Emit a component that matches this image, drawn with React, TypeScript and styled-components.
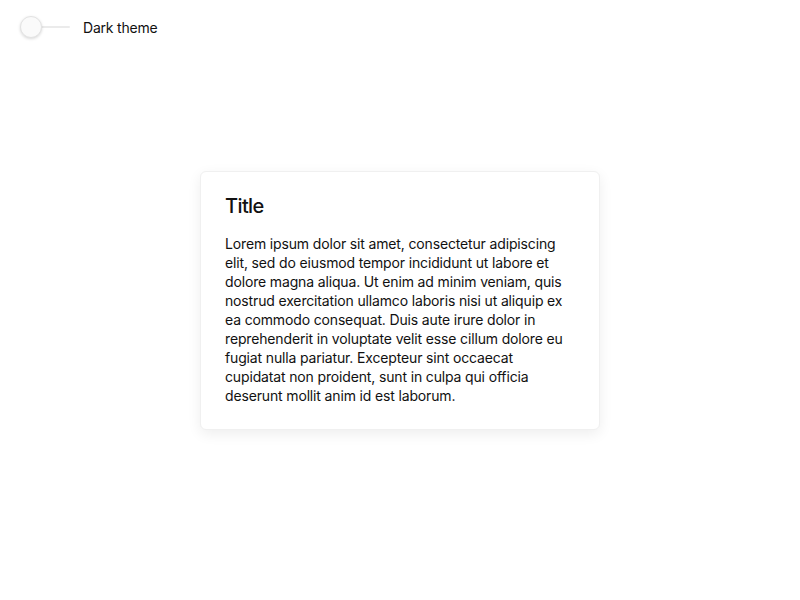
import React, { useState } from "react";
import styled, { createGlobalStyle } from "styled-components";

const Global = createGlobalStyle`
  html, body { margin: 0; padding: 0; background: #ffffff; }
  body { font-family: Inter, "Noto Sans", "Liberation Sans", sans-serif; color: #111111; }
  * { box-sizing: border-box; }
`;

const Page = styled.div`
  min-height: 100vh;
  display: grid;
  grid-template-rows: 54px 1fr 54px;
`;

const Header = styled.header`
  display: flex;
  align-items: center;
  padding-left: 20px;
  gap: 13px;
`;

const SwitchTrack = styled.button<{ $on: boolean }>`
  position: relative;
  width: 50px;
  height: 20px;
  padding: 0;
  border: none;
  background: transparent;
  cursor: pointer;
  display: flex;
  align-items: center;
  &::before {
    content: "";
    width: 100%;
    height: 2px;
    border-radius: 1px;
    background: ${(p) => (p.$on ? "#6b7280" : "#ebebeb")};
  }
`;

const Thumb = styled.span<{ $on: boolean }>`
  position: absolute;
  top: 0;
  left: ${(p) => (p.$on ? "28px" : "0")};
  width: 22px;
  height: 22px;
  margin-top: -1px;
  border-radius: 50%;
  background: #fafafa;
  border: 1px solid #e3e3e3;
  box-shadow: 0 1px 3px rgba(0, 0, 0, 0.15);
`;

const Label = styled.span`
  font-size: 14px;
  letter-spacing: -0.2px;
  color: #111;
`;

const Main = styled.main`
  display: flex;
  align-items: center;
  justify-content: center;
`;

const Card = styled.section`
  width: 400px;
  background: #fff;
  border: 1px solid #f0f0f0;
  border-radius: 6px;
  padding: 22px 24px 24px;
  box-shadow: 0 4px 14px rgba(0, 0, 0, 0.07);
`;

const Title = styled.h2`
  margin: 0 0 16px;
  font-size: 20px;
  line-height: 24px;
  font-weight: 500;
  letter-spacing: -0.6px;
  color: #111;
`;

const Body = styled.p`
  margin: 0;
  font-size: 14px;
  line-height: 19px;
  letter-spacing: -0.15px;
  color: #111;
`;

export default function App() {
  const [dark, setDark] = useState(false);
  return (
    <>
      <Global />
      <Page>
        <Header>
          <SwitchTrack $on={dark} onClick={() => setDark(!dark)} aria-label="Dark theme">
            <Thumb $on={dark} />
          </SwitchTrack>
          <Label>Dark theme</Label>
        </Header>
        <Main>
          <Card>
            <Title>Title</Title>
            <Body>
              Lorem ipsum dolor sit amet, consectetur adipiscing elit, sed do eiusmod tempor incididunt ut
              labore et dolore magna aliqua. Ut enim ad minim veniam, quis nostrud exercitation ullamco
              laboris nisi ut aliquip ex ea commodo consequat. Duis aute irure dolor in reprehenderit in
              voluptate velit esse cillum dolore eu fugiat nulla pariatur. Excepteur sint occaecat cupidatat
              non proident, sunt in culpa qui officia deserunt mollit anim id est laborum.
            </Body>
          </Card>
        </Main>
        <div />
      </Page>
    </>
  );
}
